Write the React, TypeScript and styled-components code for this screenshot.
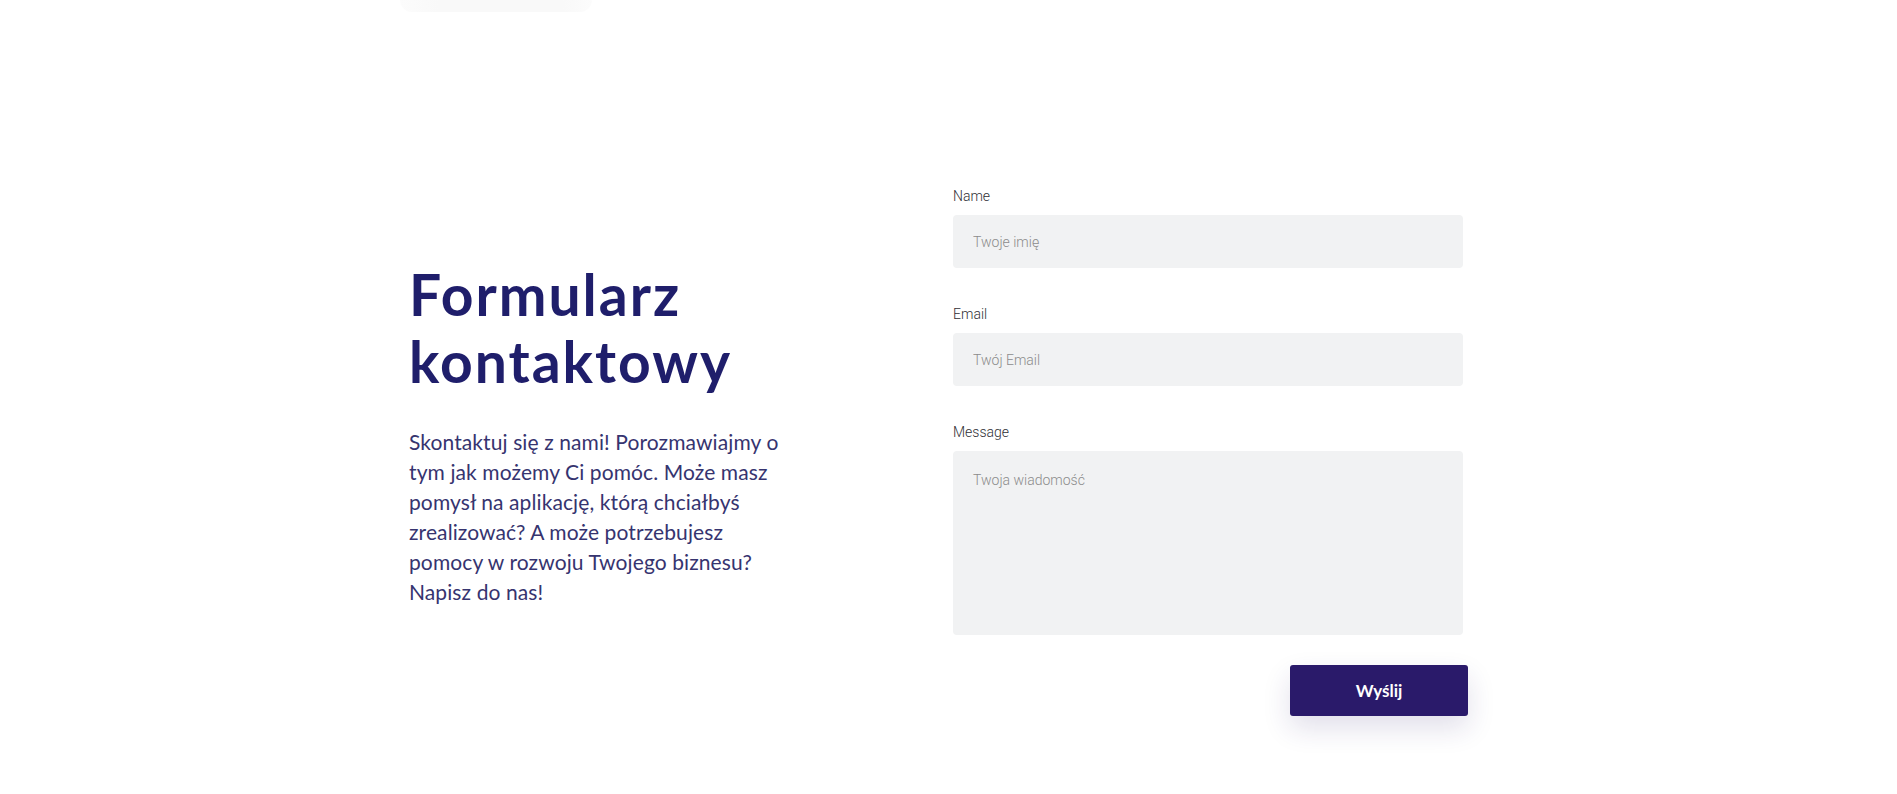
import React, { ReactElement, useState } from 'react';
import styled, { createGlobalStyle } from 'styled-components';

const GlobalStyle = createGlobalStyle`
  * {
    box-sizing: border-box;
  }

  body {
    margin: 0;
    background: #ffffff;
    font-family: Lato, 'Noto Sans', sans-serif;
  }
`;

interface FieldProps {
  label: string;
  placeholder: string;
  multiline?: boolean;
  value: string;
  onChange: (value: string) => void;
}

function FormField({
  label,
  placeholder,
  multiline,
  value,
  onChange,
}: FieldProps): ReactElement {
  return (
    <Field>
      <Label>{label}</Label>
      {multiline ? (
        <TextArea
          placeholder={placeholder}
          value={value}
          onChange={(e) => onChange(e.target.value)}
        />
      ) : (
        <Input
          type="text"
          placeholder={placeholder}
          value={value}
          onChange={(e) => onChange(e.target.value)}
        />
      )}
    </Field>
  );
}

function App(): ReactElement {
  const [name, setName] = useState('');
  const [email, setEmail] = useState('');
  const [message, setMessage] = useState('');

  return (
    <>
      <GlobalStyle />
      <TopStrip>
        <HeaderShade />
      </TopStrip>
      <Section>
        <Intro>
          <Title>
            Formularz
            <br />
            kontaktowy
          </Title>
          <Lead>
            Skontaktuj się z nami! Porozmawiajmy o tym jak możemy Ci pomóc.
            Może masz pomysł na aplikację, którą chciałbyś zrealizować? A może
            potrzebujesz pomocy w rozwoju Twojego biznesu? Napisz do nas!
          </Lead>
        </Intro>
        <Form onSubmit={(e) => e.preventDefault()}>
          <FormField
            label="Name"
            placeholder="Twoje imię"
            value={name}
            onChange={setName}
          />
          <FormField
            label="Email"
            placeholder="Twój Email"
            value={email}
            onChange={setEmail}
          />
          <FormField
            label="Message"
            placeholder="Twoja wiadomość"
            multiline
            value={message}
            onChange={setMessage}
          />
          <Actions>
            <SubmitButton type="submit">Wyślij</SubmitButton>
          </Actions>
        </Form>
      </Section>
    </>
  );
}

const TopStrip = styled.div`
  height: 14px;
  padding-left: 400px;
`;

const HeaderShade = styled.div`
  width: 192px;
  height: 12px;
  border-radius: 0 0 80px 80px;
  background: linear-gradient(90deg, #fcfcfc 0%, #f9f9f9 20%, #f9f9f9 85%, #fcfcfc 100%);
`;

const Section = styled.section`
  width: 1055px;
  margin: 0 auto;
  padding: 172px 0 70px;
  display: grid;
  grid-template-columns: 540px 510px;
  align-items: start;
  transform: translateX(-8px);
`;

const Intro = styled.div`
  padding-top: 75px;
  margin-left: -4px;
`;

const Title = styled.h1`
  margin: 0 0 32px;
  font-family: Lato, 'Noto Sans', sans-serif;
  font-weight: 700;
  font-size: 57px;
  line-height: 67px;
  letter-spacing: 2px;
  color: #1f1e6b;
`;

const Lead = styled.p`
  margin: 0;
  width: 380px;
  font-family: Lato, 'Noto Sans', sans-serif;
  font-weight: 400;
  font-size: 21px;
  line-height: 30px;
  letter-spacing: 0.1px;
  color: #36346f;
`;

const Form = styled.form`
  display: flex;
  flex-direction: column;
`;

const Field = styled.div`
  display: flex;
  flex-direction: column;

  & + & {
    margin-top: 36px;
  }
`;

const Label = styled.label`
  font-family: Roboto, 'Noto Sans', sans-serif;
  font-weight: 300;
  font-size: 14px;
  line-height: 20px;
  color: #2f2f35;
  margin-bottom: 9px;
`;

const inputBase = `
  width: 100%;
  border: none;
  outline: none;
  border-radius: 4px;
  background: #f1f2f3;
  padding: 0 20px;
  font-family: Roboto, 'Noto Sans', sans-serif;
  font-weight: 300;
  font-size: 14px;
  color: #333;

  &::placeholder {
    color: #8c8c8c;
  }
`;

const Input = styled.input`
  ${inputBase}
  height: 53px;
`;

const TextArea = styled.textarea`
  ${inputBase}
  height: 184px;
  padding-top: 19px;
  resize: none;
  line-height: 20px;
`;

const Actions = styled.div`
  display: flex;
  justify-content: flex-end;
  margin-top: 30px;
  margin-right: -5px;
`;

const SubmitButton = styled.button`
  width: 178px;
  height: 51px;
  border: none;
  border-radius: 3px;
  background: #2a1a6a;
  color: #ffffff;
  font-family: Lato, 'Noto Sans', sans-serif;
  font-weight: 700;
  font-size: 17px;
  cursor: pointer;
  box-shadow: 0 12px 28px rgba(42, 26, 106, 0.14);
`;

export default App;
